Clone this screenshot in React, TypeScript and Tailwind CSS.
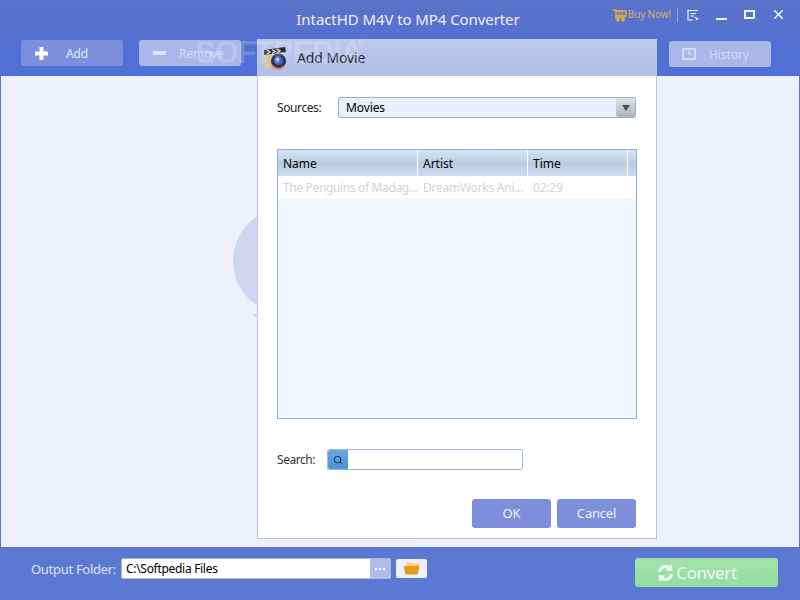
import React from 'react';
import { X, Search } from 'lucide-react';

const font = { fontFamily: '"Noto Sans", "Open Sans", sans-serif' };

const ToolButton: React.FC<{ label: string; icon: React.ReactNode; dim?: boolean; textClass: string }> = ({ label, icon, dim, textClass }) => (
    <div className={`w-[102px] h-[26px] rounded-[3px] flex items-center ${dim ? 'bg-[#a9b8e8] text-[#d3dbf5]' : 'bg-[#7b90dd] text-[#e6ebfa]'}`}>
        <span className="w-[40px] flex justify-center">{icon}</span>
        <span className={`text-[12px] leading-[16px] pt-[2px] tracking-[-0.1px] ${textClass}`}>{label}</span>
    </div>
);

const Clapper = () => (
    <svg width="25" height="24" viewBox="0 0 25 24">
        <rect x="1" y="8" width="19" height="14" rx="1" fill="#dcc39a" />
        <path d="M1 4 L22 1 L23 6 L1 9 Z" fill="#2f2b26" />
        <path d="M4 4 L7 6 L4 8 M9 3.5 L12 5.5 L9 7.5 M14 3 L17 5 L14 7" stroke="#eeeeee" strokeWidth="1.3" fill="none" />
        <circle cx="15.5" cy="15" r="7.5" fill="#23345f" />
        <circle cx="15.5" cy="14.5" r="4.5" fill="#4767b8" />
        <path d="M9 19 A7.5 7.5 0 0 0 21 20" stroke="#e8792b" strokeWidth="1.8" fill="none" />
        <circle cx="14.5" cy="13.5" r="1.8" fill="#a3bcec" />
    </svg>
);

const SyncIcon = () => (
    <svg width="19" height="20" viewBox="0 0 19 20" fill="#f2fbf3">
        <path d="M2 9 C2.5 4.5 6 2 9.5 2 C11 2 12.5 2.5 13.5 3.3 L15.5 1 L16.5 8 L9.5 7.6 L11.4 5.6 C10.8 5.2 10.1 5 9.4 5 C7.4 5 5.6 6.6 5.2 9 Z" />
        <path d="M17 11 C16.5 15.5 13 18 9.5 18 C8 18 6.5 17.5 5.5 16.7 L3.5 19 L2.5 12 L9.5 12.4 L7.6 14.4 C8.2 14.8 8.9 15 9.6 15 C11.6 15 13.4 13.4 13.8 11 Z" />
    </svg>
);

export default function App() {
    return (
        <div style={font} className="relative w-[800px] h-[600px] overflow-hidden flex flex-col bg-[#eef1fa]">
            {/* title + toolbar */}
            <div className="h-[76px] bg-gradient-to-b from-[#5a72c9] to-[#4f70da] flex flex-col shrink-0">
                <div className="h-[40px] relative flex justify-center items-start pt-[9px] pl-[16px]">
                    <span className="text-[15px] leading-[20px] tracking-[-0.08px] text-[#eef1fb]">IntactHD M4V to MP4 Converter</span>
                    <div className="absolute right-[14px] top-[7px] flex items-center text-white">
                        <svg width="14" height="14" viewBox="0 0 14 14" fill="none" stroke="#e8b23c" strokeWidth="1.4">
                            <path d="M0 2 H3 V10 H12 M3 3 H13 V8 H3" />
                            <path d="M6 3 V8 M9 3 V8" strokeWidth="1" />
                            <circle cx="5" cy="12" r="1" />
                            <circle cx="10" cy="12" r="1" />
                        </svg>
                        <span className="text-[10px] tracking-[-0.15px] text-[#d5ae6a] ml-[1px]">Buy Now!</span>
                        <span className="w-px h-[14px] bg-[#8fa3e2] ml-[6px] mr-[9px]" />
                        <svg width="12" height="12" viewBox="0 0 12 12" fill="none" stroke="#f2f4fc" strokeWidth="1.2">
                            <path d="M0 1.5 H11 M1 1.5 V11 H6 M3.5 4.5 H9 M3.5 7 H7" />
                            <path d="M7.5 7.5 L11.5 9.5 L9.5 11.5 Z" fill="#f2f4fc" stroke="none" />
                        </svg>
                        <span className="w-[11px] h-[2px] bg-[#f2f4fc] ml-[17px] mt-[9px]" />
                        <span className="w-[11px] h-[9px] border-2 border-[#f2f4fc] ml-[17px]" />
                        <X size={15} strokeWidth={2.6} className="ml-[16px] text-[#f2f4fc]" />
                    </div>
                </div>
                <div className="flex pl-[21px] pr-[29px] justify-between">
                    <div className="flex gap-[16px]">
                        <ToolButton textClass="ml-[5px]" label="Add" icon={<svg width="13" height="13" viewBox="0 0 13 13" fill="#ffffff"><path d="M4.5 0 H8.5 V4.5 H13 V8.5 H8.5 V13 H4.5 V8.5 H0 V4.5 H4.5 Z" /></svg>} />
                        <ToolButton dim textClass="" label="Remove" icon={<svg width="13" height="4" viewBox="0 0 13 4" fill="#dfe4f8"><rect width="13" height="4" /></svg>} />
                    </div>
                    <div className="mt-[1px]">
                        <ToolButton dim textClass="" label="History" icon={
                            <svg width="14" height="12" viewBox="0 0 14 12" fill="none" stroke="#dfe4f8" strokeWidth="1.6">
                                <rect x="1" y="1" width="12" height="10" />
                                <path d="M7 3 V6 H10" strokeWidth="1.2" />
                            </svg>
                        } />
                    </div>
                </div>
            </div>

            {/* empty main area */}
            <div className="flex-1 border-x border-[#5a72c9] bg-[#eef1fa] relative">
                <svg className="absolute left-[231px] top-[130px]" width="110" height="115" viewBox="0 0 110 115">
                    <circle cx="54" cy="55" r="53" fill="#ced6f0" />
                    <ellipse cx="26" cy="109" rx="5" ry="2" fill="#ced6f0" />
                </svg>
            </div>

            {/* footer */}
            <div className="h-[53px] bg-[#5b78d2] shrink-0 flex items-start pt-[11px] pl-[31px] pr-[22px]">
                <span className="text-[13px] leading-[22px] tracking-[-0.3px] text-[#dfe5f8] w-[90px]">Output Folder:</span>
                <div className="w-[270px] h-[21px] rounded-[2px] bg-white border border-[#a9b8e2] flex">
                    <span className="flex-1 text-[12px] leading-[19px] tracking-[-0.3px] text-black pl-[4px]">C:\Softpedia Files</span>
                    <span className="w-[20px] bg-[#b0bde8] rounded-r-[2px] flex items-center justify-center gap-[2px]">
                        <span className="w-[2px] h-[2px] bg-white" />
                        <span className="w-[2px] h-[2px] bg-white" />
                        <span className="w-[2px] h-[2px] bg-white" />
                    </span>
                </div>
                <div className="w-[31px] h-[19px] mt-[1px] ml-[5px] bg-[#eef1fa] rounded-[2px] flex items-center justify-center">
                    <svg width="17" height="13" viewBox="0 0 17 13">
                        <path d="M3 3 L4 0.5 H9 L10 1.5 H16.5 V4 H3 Z" fill="#f7d27e" />
                        <path d="M0.5 4 H16.5 L14.5 12.5 H2.5 Z" fill="#e59a1c" />
                    </svg>
                </div>
                <div className="ml-auto w-[143px] h-[29px] pr-[20px] rounded-[3px] bg-gradient-to-b from-[#a2e3ad] to-[#93dd9f] flex items-center justify-center text-[#f2fbf3]">
                    <SyncIcon />
                    <span className="text-[17px] leading-[29px] tracking-[-0.35px] ml-[1px]">Convert</span>
                </div>
            </div>

            {/* Add Movie dialog */}
            <div className="absolute left-[257px] top-[39px] w-[400px] h-[500px] bg-white border border-[#b9c5ec] border-t-0 flex flex-col">
                <div className="h-[37px] -mx-px bg-gradient-to-b from-[#bcc8ee] to-[#b2bfe7] flex items-center pl-[6px] rounded-t-[2px] shrink-0">
                    <Clapper />
                    <span className="text-[14px] tracking-[-0.1px] text-[#1c2233] ml-[9px]">Add Movie</span>
                </div>
                <div className="flex-1 flex flex-col px-[19px]">
                    <div className="flex items-center mt-[21px]">
                        <span className="text-[12px] tracking-[-0.4px] text-[#222] w-[61px]">Sources:</span>
                        <div className="w-[298px] h-[21px] border border-[#9fb1c9] rounded-[2px] bg-[#e9f0fd] flex items-center justify-between">
                            <span className="text-[12px] tracking-[-0.1px] text-black pl-[7px]">Movies</span>
                            <span className="w-[19px] h-[19px] rounded-[2px] bg-gradient-to-b from-[#dfe2e7] to-[#aeb2bb] flex items-center justify-center">
                                <svg width="8" height="6" viewBox="0 0 8 6"><path d="M0 0 H8 L4 6 Z" fill="#444c5c" /></svg>
                            </span>
                        </div>
                    </div>
                    <div className="mt-[31px] w-[360px] h-[270px] border border-[#8fb0dc] bg-[#eef6fe] flex flex-col">
                        <div className="h-[26px] flex text-[12px] text-black bg-white gap-px">
                            {[['Name', 'w-[139px]'], ['Artist', 'w-[109px]'], ['Time', 'w-[99px]'], ['', 'flex-1']].map(([h, w]) => (
                                <div key={h} className={`${w} pl-[5px] leading-[28px] bg-gradient-to-b from-[#d6e6f7] via-[#b9cbdf] to-[#cbdcee]`}>{h}</div>
                            ))}
                        </div>
                        <div className="h-[23px] bg-white flex text-[12px] leading-[23px] text-[#d3d3d3] gap-px">
                            <span className="w-[139px] pl-[5px] tracking-[-0.35px] whitespace-nowrap">The Penguins of Madag...</span>
                            <span className="w-[109px] pl-[5px] tracking-[-0.25px] whitespace-nowrap">DreamWorks Ani...</span>
                            <span className="pl-[5px] tracking-[-0.2px]">02:29</span>
                        </div>
                    </div>
                    <div className="flex items-center mt-[30px]">
                        <span className="text-[12px] tracking-[-0.45px] text-[#333] w-[50px]">Search:</span>
                        <div className="w-[196px] h-[21px] rounded-[2px] border border-[#9fb9d6] bg-white flex">
                            <span className="w-[20px] bg-gradient-to-b from-[#6aa6e0] to-[#4f91d6] rounded-l-[2px] flex items-center justify-center">
                                <Search size={10} strokeWidth={2.4} className="text-[#1f3454]" />
                            </span>
                        </div>
                    </div>
                    <div className="flex justify-end gap-[6px] mt-[29px] pr-[1px]">
                        <div className="w-[79px] h-[29px] rounded-[3px] bg-[#7d8fdb] text-[#eef1fb] text-[13px] leading-[29px] text-center">OK</div>
                        <div className="w-[79px] h-[29px] rounded-[3px] bg-[#7d8fdb] text-[#eef1fb] text-[13px] tracking-[-0.2px] leading-[29px] text-center">Cancel</div>
                    </div>
                </div>
            </div>

            {/* watermark */}
            <span className="absolute left-[195px] top-[35px] text-[31px] leading-[36px] font-bold tracking-[-1.2px] text-white/20 [font-family:'Liberation_Sans',sans-serif]">SOFTPEDIA</span>
            <span className="absolute left-[358px] top-[39px] w-[6px] h-[6px] rounded-full border border-white/30" />
        </div>
    );
}
